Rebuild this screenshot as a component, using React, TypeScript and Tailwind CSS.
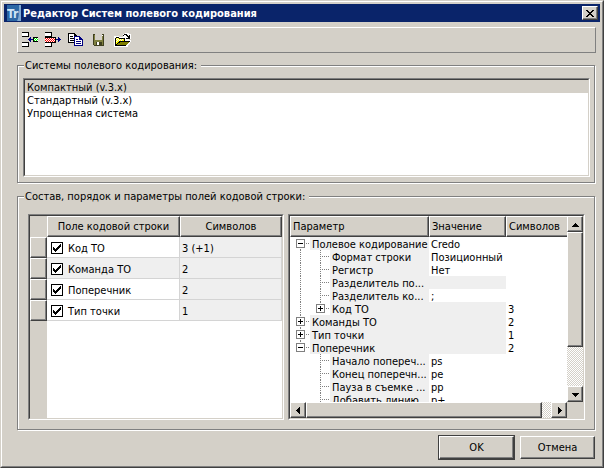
import { useState } from "react"
import type { ReactNode } from "react"

const systems = ["Компактный (v.3.x)", "Стандартный (v.3.x)", "Упрощенная система"]

const fields = [
    { name: "Код ТО", symbols: "3 (+1)" },
    { name: "Команда ТО", symbols: "2" },
    { name: "Поперечник", symbols: "2" },
    { name: "Тип точки", symbols: "1" },
]

type Param = {
    name: string
    level: 0 | 1
    value?: string
    symbols?: string
    box?: "plus" | "minus"
    first?: boolean
    last?: boolean
    under?: boolean
}

// "under" keeps the root line running past a nested row
const params: Param[] = [
    { name: "Полевое кодирование", level: 0, value: "Credo", box: "minus", first: true },
    { name: "Формат строки", level: 1, value: "Позиционный", under: true },
    { name: "Регистр", level: 1, value: "Нет", under: true },
    { name: "Разделитель по...", level: 1, under: true },
    { name: "Разделитель ко...", level: 1, value: ";", under: true },
    { name: "Код ТО", level: 1, symbols: "3", box: "plus", under: true, last: true },
    { name: "Команды ТО", level: 0, symbols: "2", box: "plus" },
    { name: "Тип точки", level: 0, symbols: "1", box: "plus" },
    { name: "Поперечник", level: 0, symbols: "2", box: "minus", last: true },
    { name: "Начало попереч...", level: 1, value: "ps" },
    { name: "Конец поперечн...", level: 1, value: "pe" },
    { name: "Пауза в съемке ...", level: 1, value: "pp" },
    { name: "Добавить линию...", level: 1, value: "p+" },
]

const raised = "border border-t-white border-l-white border-r-[#404040] border-b-[#404040] bg-[#d4d0c8] shadow-[inset_-1px_-1px_0_#808080]"

const headCell = raised + " p-0 font-normal"

function Sunken({ className, children }: { className: string, children: ReactNode }) {
    return (
        <div className={"flex min-w-0 border border-t-[#808080] border-l-[#808080] border-r-white border-b-white " + className}>
            <div className="flex min-w-0 flex-1 flex-col border border-t-[#404040] border-l-[#404040] border-r-[#d4d0c8] border-b-[#d4d0c8] bg-white">
                {children}
            </div>
        </div>
    )
}

function Group({ title, className, legend, children }: { title: string, className: string, legend: string, children: ReactNode }) {
    return (
        <fieldset className={"mr-px min-w-0 border border-[#808080] shadow-[inset_1px_1px_0_#fff,1px_1px_0_#fff] " + className}>
            <legend className={"bg-[#d4d0c8] pr-1 pl-px " + legend}>{title}</legend>
            {children}
        </fieldset>
    )
}

function Arrow({ d }: { d: string }) {
    return (
        <svg width="7" height="7" viewBox="0 0 7 7" shapeRendering="crispEdges">
            <path d={d} />
        </svg>
    )
}

function TreeLines({ row }: { row: Param }) {
    const x = row.level === 0 ? 10 : 30
    const top = row.first ? 6 : 0
    const bottom = row.last ? 6 : 13
    return (
        <svg className="shrink-0" width={x + 10} height="13" viewBox={`0 0 ${x + 10} 13`} fill="none" shapeRendering="crispEdges">
            <g stroke="#808080" strokeDasharray="1 1">
                {row.under && <path d="M10.5 0v13" />}
                <path d={`M${x}.5 ${top}V${bottom}`} />
                <path d={`M${x} 6.5h10`} />
            </g>
            {row.box && (
                <g>
                    <rect x={x - 3.5} y="2.5" width="8" height="8" fill="#fff" stroke="#808080" />
                    <path d={`M${x - 2} 6.5h5`} stroke="#000" />
                    {row.box === "plus" && <path d={`M${x}.5 4v5`} stroke="#000" />}
                </g>
            )}
        </svg>
    )
}

function InsertIcon() {
    return (
        <svg width="16" height="16" viewBox="0 0 16 16" shapeRendering="crispEdges">
            <path fill="#fff" d="M0 1h6v3H0zM0 11h6v3H0z" />
            <path d="M0 0h7v5H0V4h6V1H0zM0 10h7v5H0v-1h6v-3H0z" />
            <path fill="#000080" d="M6 7h1V6h1V5h1v2h3v1H9v2H8V9H7V8H6z" />
            <path d="M11 5h5v1h-4v3h4v1h-5z" />
            <path fill="#00ff00" d="M12 6h4v3h-4z" />
            <path fill="#fff" d="M13 6h1v1h-1zM15 6h1v1h-1zM12 7h1v1h-1zM14 7h1v1h-1zM13 8h1v1h-1zM15 8h1v1h-1z" />
        </svg>
    )
}

function RemoveIcon() {
    return (
        <svg width="16" height="16" viewBox="0 0 16 16" shapeRendering="crispEdges">
            <rect y="1" width="6" height="3" fill="#fff" />
            <rect y="11" width="6" height="3" fill="#fff" />
            <path d="M0 0h7v5H0V4h6V1H0z" />
            <path d="M0 10h7v5H0v-1h6v-3H0z" />
            <rect y="5" width="11" height="6" />
            <rect y="6" width="10" height="4" fill="#ff0000" />
            <path fill="#fff" d="M1 6h1v1H1zM3 6h1v1H3zM5 6h1v1H5zM7 6h1v1H7zM9 6h1v1H9zM0 7h1v1H0zM2 7h1v1H2zM4 7h1v1H4zM6 7h1v1H6zM8 7h1v1H8z" />
            <path fill="#fff" d="M1 8h1v1H1zM3 8h1v1H3zM5 8h1v1H5zM7 8h1v1H7zM9 8h1v1H9zM0 9h1v1H0zM2 9h1v1H2zM4 9h1v1H4zM6 9h1v1H6zM8 9h1v1H8z" />
            <path fill="#000080" d="M11 7h2V5h1v1h1v1h1v1h-1v1h-1v1h-1V8h-2z" />
        </svg>
    )
}

function CopyIcon() {
    return (
        <svg width="16" height="14" viewBox="0 0 16 14" shapeRendering="crispEdges">
            <path d="M0 0h7v1h1v1h1v8H0z" />
            <path fill="#fff" d="M1 1h5v2h2v6H1z" />
            <path d="M2 3h3v1H2zM2 5h5v1H2zM2 7h5v1H2z" />
            <path fill="#000080" d="M6 3h6v1h1v1h1v1h1v7H6z" />
            <path fill="#fff" d="M7 4h4v3h3v5H7z" />
            <path fill="#000080" d="M8 6h2v1H8zM8 8h5v1H8zM8 10h5v1H8z" />
        </svg>
    )
}

function SaveIcon() {
    return (
        <svg width="11" height="12" viewBox="0 0 11 12" shapeRendering="crispEdges">
            <path fill="#404020" d="M0 0h11v12H1v-1H0z" />
            <path fill="#808040" d="M1 1h9v10H1z" />
            <path fill="#d4d0c8" d="M2 0h7v6H2z" />
            <path fill="#404020" d="M3 8h6v4H3z" />
            <path fill="#fff" d="M4 8h2v3H4zM9 1h1v1H9z" />
        </svg>
    )
}

function OpenIcon() {
    return (
        <svg width="17" height="14" viewBox="0 0 17 14" shapeRendering="crispEdges">
            <path fill="#fff" d="M0 3h5v1h4V1h2V0h4v1h2v5h-2v1h2v2h-1v2h-1v1h-1v2H0z" />
            <path d="M9 2h1V1h3v1h1v1h1V2h1v4h-4V5h2V4h-1V3h-1V2h-2v1H9z" />
            <path d="M2 4h3v1h6v3h5v1h-1v1h-1v1h-1v1h-1v1H1V5h1z" />
            <path fill="#ffff00" d="M2 5h3v1h5v2H5v1H4v1H3v1H2z" />
            <path fill="#fff" d="M3 5h1v1H3zM2 6h1v1H2zM4 6h1v1H4zM6 6h1v1H6zM8 6h1v1H8zM3 7h1v1H3zM5 7h1v1H5zM7 7h1v1H7zM2 8h1v1H2z" />
            <path fill="#808000" d="M6 9h9v1h-1v1h-1v1H3v-1h1v-1h2z" />
        </svg>
    )
}

const tools = [
    { label: "Вставить", icon: <InsertIcon />, width: "w-[23px]" },
    { label: "Удалить", icon: <RemoveIcon />, width: "w-[23px]" },
    { label: "Копировать", icon: <CopyIcon />, width: "w-[25px]" },
    { label: "Сохранить", icon: <SaveIcon />, width: "w-[21px]" },
    { label: "Открыть", icon: <OpenIcon />, width: "w-[23px]" },
]

const track = "bg-[repeating-conic-gradient(#fff_0_25%,#d4d0c8_0_50%)] bg-[length:2px_2px]"

function ParamTree() {
    return (
        <Sunken className="h-[206px]">
            <div className="flex min-h-0 flex-1">
                <div className="min-w-0 flex-1 overflow-hidden">
                    <table className="w-[293px] min-w-full table-fixed border-separate border-spacing-0 text-left">
                        <colgroup>
                            <col className="w-[139px]" />
                            <col className="w-[77px]" />
                            <col />
                        </colgroup>
                        <thead>
                            <tr className="h-[21px]">
                                <th className={headCell + " pl-0.5"}>Параметр</th>
                                <th className={headCell + " pl-0.5"}>Значение</th>
                                <th className={headCell + " pl-0.5"}>Символов</th>
                            </tr>
                        </thead>
                        <tbody className="leading-[15px]">
                            {params.map((row) => (
                                <tr key={row.name}>
                                    <td className="p-0">
                                        <div className="flex h-[13px]">
                                            <TreeLines row={row} />
                                            <span className="min-w-0 flex-1 bg-[#efefef] pl-0.5 whitespace-nowrap">{row.name}</span>
                                        </div>
                                    </td>
                                    <td className={row.value ? "p-0" : "bg-[#efefef] p-0"}>
                                        <div className="h-[13px] pl-0.5">{row.value}</div>
                                    </td>
                                    <td className="p-0">
                                        <div className="h-[13px] pl-0.5">{row.symbols}</div>
                                    </td>
                                </tr>
                            ))}
                        </tbody>
                    </table>
                </div>
                <div className={"flex w-4 shrink-0 flex-col " + track}>
                    <button aria-label="Вверх" className={"flex h-4 items-center justify-center " + raised}>
                        <Arrow d="M3 2h1v1h1v1h1v1h1v1H0V5h1V4h1V3h1z" />
                    </button>
                    <div className={"h-[115px] " + raised}></div>
                    <button aria-label="Вниз" className={"mt-auto flex h-4 items-center justify-center " + raised}>
                        <Arrow d="M0 2h7v1H6v1H5v1H4v1H3V5H2V4H1V3H0z" />
                    </button>
                </div>
            </div>
            <div className="flex h-4 bg-[#d4d0c8]">
                <div className={"flex min-w-0 flex-1 " + track}>
                    <button aria-label="Влево" className={"flex w-4 items-center justify-center " + raised}>
                        <Arrow d="M5 0v7H4V6H3V5H2V4H1V3h1V2h1V1h1V0z" />
                    </button>
                    <div className={"mr-[9px] flex-1 " + raised}></div>
                    <button aria-label="Вправо" className={"flex w-4 items-center justify-center " + raised}>
                        <Arrow d="M2 0v7h1V6h1V5h1V4h1V3H5V2H4V1H3V0z" />
                    </button>
                </div>
                <div className="w-4"></div>
            </div>
        </Sunken>
    )
}

export default function App() {
    const [selected, setSelected] = useState(0)

    return (
        <div className="flex min-h-screen flex-col border border-t-[#d4d0c8] border-l-[#d4d0c8] border-r-[#404040] border-b-[#404040] bg-[#d4d0c8] font-['DejaVu_Sans_Condensed','DejaVu_Sans',sans-serif] text-[11px] leading-[13px] text-black">
            <div className="flex flex-1 flex-col border border-t-white border-l-white border-r-[#808080] border-b-[#808080]">
                <header className="mx-0.5 mt-0.5 flex h-[18px] items-center bg-[#0a246a] pr-0.5 pl-[3px] text-white">
                    <svg width="14" height="16" viewBox="0 0 14 16">
                        <rect width="14" height="16" fill="#2c67a5" />
                        <path d="M12 0h2v16h-4c2-3 2-9 2-16z" fill="#7fa9d4" />
                        <text x="0" y="13" fontSize="12" fontWeight="bold" fill="#cfe4f7" fontFamily="DejaVu Sans Condensed, DejaVu Sans, sans-serif">Tr</text>
                    </svg>
                    <h1 className="ml-0.5 flex-1 truncate font-bold">Редактор Систем полевого кодирования</h1>
                    <button aria-label="Закрыть" className={"flex h-3.5 w-4 items-center justify-center " + raised}>
                        <svg width="8" height="7" viewBox="0 0 8 7" shapeRendering="crispEdges">
                            <path d="M0 0h2v1h1v1h2V1h1V0h2v1H7v1H6v1H5v1h1v1h1v1h1v1H6V6H5V5H3v1H2v1H0V6h1V5h1V4h1V3H2V2H1V1H0z" />
                        </svg>
                    </button>
                </header>

                <main className="mt-[5px] flex flex-1 flex-col pr-1.5 pb-1.5 pl-[15px]">
                    <div className="flex h-[26px] items-center border border-t-white border-l-white border-r-[#808080] border-b-[#808080] pl-1">
                        {tools.map((tool) => (
                            <button key={tool.label} aria-label={tool.label} className={"flex h-5 items-center " + tool.width}>
                                {tool.icon}
                            </button>
                        ))}
                    </div>

                    <Group title="Системы полевого кодирования:" className="mt-1.5 pt-1.5 pr-1 pb-[5px] pl-[5px]" legend="ml-px">
                        <Sunken className="h-[99px]">
                            <ul role="listbox" aria-label="Системы полевого кодирования" className="leading-[15px]">
                                {systems.map((name, i) => (
                                    <li
                                        key={name}
                                        role="option"
                                        aria-selected={i === selected}
                                        onClick={() => setSelected(i)}
                                        className={i === selected ? "h-[13px] bg-[#d4d0c8] pl-0.5" : "h-[13px] pl-0.5"}
                                    >
                                        {name}
                                    </li>
                                ))}
                            </ul>
                        </Sunken>
                    </Group>

                    <Group title="Состав, порядок и параметры полей кодовой строки:" className="mt-[7px] pt-[11px] pr-[9px] pb-[9px] pl-[10px]" legend="-ml-1">
                        <div className="grid grid-cols-[256fr_297fr] gap-1">
                            <Sunken className="h-[206px]">
                                <div className="flex-1 bg-[linear-gradient(to_right,#d4d0c8_17px,#fff_17px)]">
                                    <table className="w-full table-fixed border-separate border-spacing-0">
                                        <colgroup>
                                            <col className="w-[17px]" />
                                            <col />
                                            <col className="w-[102px]" />
                                        </colgroup>
                                        <thead>
                                            <tr className="h-[21px]">
                                                <td className="p-0"></td>
                                                <th className={headCell}>Поле кодовой строки</th>
                                                <th className={headCell}>Символов</th>
                                            </tr>
                                        </thead>
                                        <tbody>
                                            {fields.map((field, i) => (
                                                <tr key={field.name} className="h-[21px]">
                                                    <td className={"p-0 " + raised}></td>
                                                    <td className={"border-r border-b border-[#d4d4d4] p-0 pt-0.5 " + (i === 1 ? "bg-[#efefef]" : "bg-white")}>
                                                        <label className="flex items-center gap-[5px] pl-1">
                                                            <span className="grid h-3 w-3">
                                                                <input type="checkbox" defaultChecked className="peer col-start-1 row-start-1 h-3 w-3 appearance-none border border-black bg-white" />
                                                                <svg className="pointer-events-none invisible col-start-1 row-start-1 peer-checked:visible" width="12" height="12" viewBox="0 0 12 12" shapeRendering="crispEdges">
                                                                    <path d="M2 5h1v1h1v1h1V6h1V5h1V4h1V3h1V2h1v3H9v1H8v1H7v1H6v1H5v1H4V9H3V8H2z" />
                                                                </svg>
                                                            </span>
                                                            {field.name}
                                                        </label>
                                                    </td>
                                                    <td className="border-r border-b border-[#d4d4d4] bg-[#efefef] p-0 pt-0.5 pl-0.5">{field.symbols}</td>
                                                </tr>
                                            ))}
                                        </tbody>
                                    </table>
                                </div>
                            </Sunken>
                            <ParamTree />
                        </div>
                    </Group>

                    <footer className="mt-[5px] mr-px flex items-center justify-end gap-[5px]">
                        <button className="flex h-[25px] w-[77px] border border-[#404040]">
                            <span className={"flex flex-1 items-center justify-center self-stretch " + raised}>OK</span>
                        </button>
                        <button className={"h-[23px] w-[75px] " + raised}>Отмена</button>
                    </footer>
                </main>
            </div>
        </div>
    )
}
